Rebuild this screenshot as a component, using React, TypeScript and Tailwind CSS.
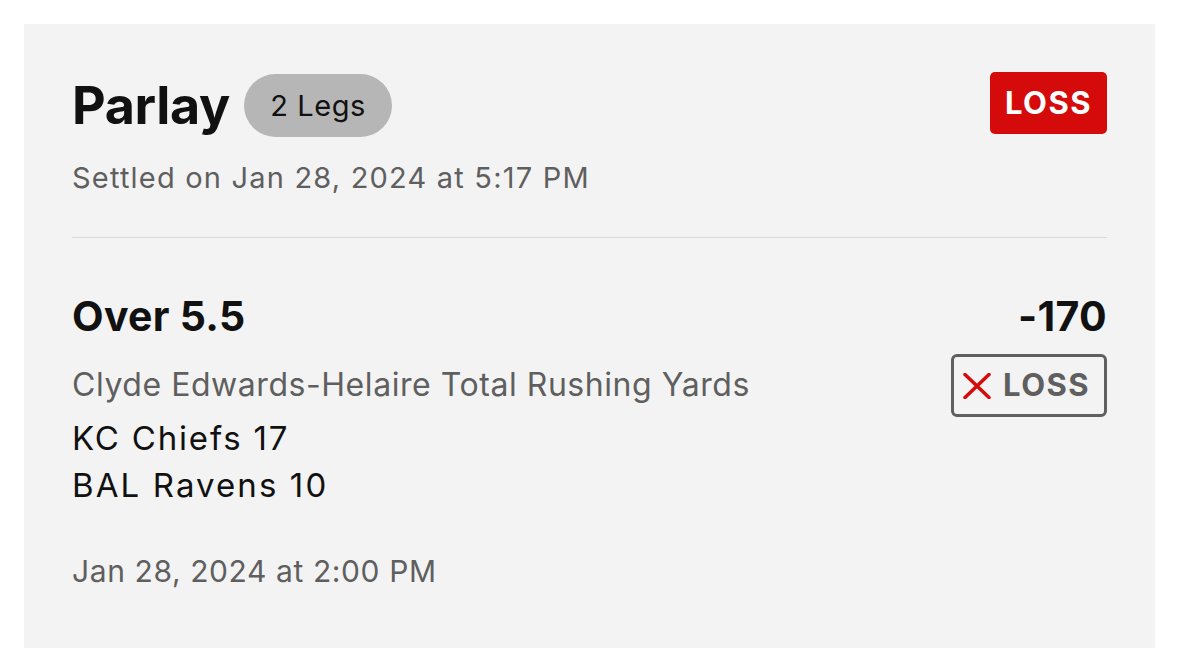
import React from 'react'

const font = { fontFamily: 'Inter, "Noto Sans", sans-serif' }

function LossBadge() {
  return (
    <div className="flex h-[62px] w-[117px] items-center justify-center rounded-[5px] bg-[#d50a0a] text-[31px] font-bold tracking-[1.5px] text-white">
      LOSS
    </div>
  )
}

function LegResult() {
  return (
    <div className="flex h-[63px] w-[156px] items-center gap-[12px] rounded-[6px] border-[3px] border-[#5f5f5f] pl-[9px] text-[31px] font-bold tracking-[1.5px] text-[#5f5f5f]">
      <svg width="28" height="26" viewBox="0 0 28 26" fill="none">
        <path
          d="M2 1.5L26 24.5M26 1.5L2 24.5"
          stroke="#d50a0a"
          strokeWidth="3.5"
          strokeLinecap="round"
        />
      </svg>
      LOSS
    </div>
  )
}

export default function App() {
  return (
    <div className="min-h-screen bg-white px-6 pt-6" style={font}>
      <div className="min-h-[624px] bg-[#f3f3f3] px-12 pt-12">
        {/* header */}
        <div className="flex items-start justify-between">
          <div>
            <div className="mt-[2px] flex items-center gap-[14px]">
              <h1 className="text-[52px] font-bold leading-none tracking-[-0.3px] text-[#111]">
                Parlay
              </h1>
              <span className="flex h-[63px] items-center rounded-full bg-[#b5b6b5] px-[26px] text-[29px] tracking-[0.6px] text-[#111]">
                2 Legs
              </span>
            </div>
            <p className="mt-[26px] text-[29px] leading-none tracking-[1.2px] text-[#5f5f5f]">
              Settled on Jan 28, 2024 at 5:17 PM
            </p>
          </div>
          <LossBadge />
        </div>

        <div className="mt-[45px] h-px bg-[#d9d9d9]" />

        {/* leg */}
        <div className="mt-[58px] flex items-start justify-between">
          <div>
            <div className="text-[41px] font-bold leading-none tracking-[0.3px] text-[#111]">
              Over 5.5
            </div>
            <div className="mt-[32px] text-[32px] leading-none tracking-[0.55px] text-[#5f5f5f]">
              Clyde Edwards-Helaire Total Rushing Yards
            </div>
            <div className="mt-[14px] text-[33px] leading-[47px] text-[#111]">
              <div className="tracking-[1.8px]">KC Chiefs 17</div>
              <div className="tracking-[2.1px]">BAL Ravens 10</div>
            </div>
            <div className="mt-[47px] text-[30px] leading-none tracking-[0.6px] text-[#5f5f5f]">
              Jan 28, 2024 at 2:00 PM
            </div>
          </div>
          <div className="flex flex-col items-end">
            <div className="text-[41px] font-bold leading-none tracking-[0.3px] text-[#111]">
              -170
            </div>
            <div className="mt-[17px]">
              <LegResult />
            </div>
          </div>
        </div>
      </div>
    </div>
  )
}
